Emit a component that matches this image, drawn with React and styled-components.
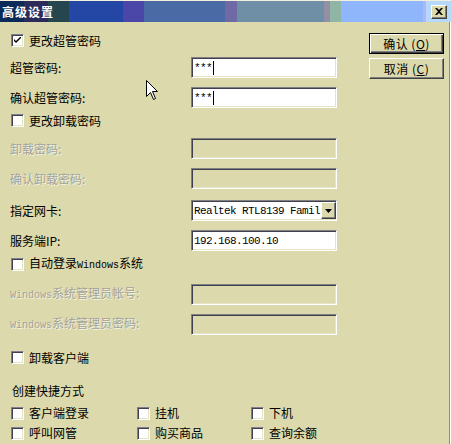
import React from 'react';
import styled, { createGlobalStyle } from 'styled-components';

const GlobalStyle = createGlobalStyle`
	html, body {
		margin: 0;
		padding: 0;
		background: #dcd9ac;
	}
	* {
		box-sizing: border-box;
	}
`;

const FACE = '#dcd9ac';
const CJK = `"Noto Sans CJK SC", "Liberation Sans", sans-serif`;
const MONO = `"Liberation Mono", "DejaVu Sans Mono", monospace`;

const Window = styled.div`
	position: relative;
	width: 451px;
	height: 444px;
	overflow: hidden;
	background: ${FACE};
	font-family: ${CJK};
	font-size: 12px;
	line-height: 14px;
	color: #000;
	box-shadow: inset -1px 0 #ffffff, inset -2px 0 #8a8a9a;
`;

const TitleBar = styled.div`
	display: flex;
	align-items: center;
	justify-content: space-between;
	height: 22px;
	border-top: 1px solid #f2f0dc;
	padding: 0 4px 0 2px;
	background: linear-gradient(
		to right,
		#0a2a5a 0 24px,
		#2b2a5a 24px 48px,
		#25454f 48px 69px,
		#2447a6 69px 123px,
		#4a47a8 123px 144px,
		#4a6aa6 144px 225px,
		#6f6aa5 225px 237px,
		#6e8fa5 237px 324px,
		#938fa5 324px 330px,
		#8fb5a5 330px 341px,
		#8fb5fb 341px 423px,
		#b3b5fb 423px 426px,
		#b5d8fb 426px 100%
	);
`;

const Title = styled.span`
	color: #fff;
	font-weight: bold;
	font-size: 12px;
	letter-spacing: 1px;
	line-height: 21px;
`;

const CloseButton = styled.div`
	display: flex;
	align-items: center;
	justify-content: center;
	width: 16px;
	height: 14px;
	background: ${FACE};
	border: 1px solid;
	border-color: #ffffff #404040 #404040 #ffffff;
	box-shadow: inset -1px -1px #808080;
`;

const Body = styled.div`
	display: flex;
`;

const Form = styled.div`
	flex: 0 0 369px;
	padding-left: 10px;
	display: flex;
	flex-direction: column;
`;

const Side = styled.div`
	display: flex;
	flex-direction: column;
	gap: 4px;
	margin-top: 11px;
`;

const Row = styled.div`
	display: flex;
	align-items: center;
	height: 21px;
	flex: none;
	margin-top: ${(p) => p.$mt}px;
`;

const Label = styled.span`
	flex: 0 0 181px;
	white-space: nowrap;
	color: ${(p) => (p.$disabled ? '#a3a39c' : '#000')};
	text-shadow: ${(p) => (p.$disabled ? '1px 1px 0 #f4f2de' : 'none')};
`;

const Latin = styled.span`
	font-family: ${MONO};
	font-size: 10px;
`;

const Field = styled.div`
	display: flex;
	align-items: center;
	width: 146px;
	height: 21px;
	padding: 0 2px;
	background: ${(p) => (p.$disabled ? FACE : '#fff')};
	border: 1px solid;
	border-color: #808080 #ffffff #ffffff #808080;
	box-shadow: inset 1px 1px #404050, inset -1px -1px #e6e4c8;
	font-family: ${MONO};
	font-size: 11px;
	letter-spacing: -0.6px;
	white-space: nowrap;
	overflow: hidden;
`;

const Caret = styled.span`
	display: inline-block;
	width: 1px;
	height: 14px;
	background: #000;
	margin-left: 1px;
`;

const SelectText = styled.span`
	flex: 1;
	overflow: hidden;
`;

const DropButton = styled.div`
	display: flex;
	align-items: center;
	justify-content: center;
	flex: 0 0 15px;
	height: 17px;
	margin-right: -2px;
	background: ${FACE};
	border: 1px solid;
	border-color: #ffffff #404040 #404040 #ffffff;
	box-shadow: inset -1px -1px #808080;
`;

const Check = styled.label`
	display: flex;
	align-items: center;
	gap: 5px;
	margin-left: 1px;
	white-space: nowrap;
`;

const Box = styled.span`
	display: flex;
	align-items: center;
	justify-content: center;
	width: 13px;
	height: 13px;
	background: #fff;
	border: 1px solid;
	border-color: #808090 #ffffff #ffffff #808090;
	box-shadow: inset 1px 1px #404050, inset -1px -1px #e6e4c8;
`;

const Section = styled.span`
	margin-left: 2px;
`;

const Shortcuts = styled.div`
	display: grid;
	grid-template-columns: 126px 114px 1fr;
	margin-top: 2px;
`;

const ShortcutRow = styled(Row)`
	height: 20px;
`;

const Button = styled.div`
	display: flex;
	align-items: center;
	justify-content: center;
	width: 75px;
	height: 21px;
	background: ${FACE};
	border: 1px solid;
	border-color: ${(p) => (p.$default ? '#000' : '#ffffff #404040 #404040 #ffffff')};
	box-shadow: ${(p) =>
		p.$default
			? 'inset 1px 1px #ffffff, inset -1px -1px #404040, inset -2px -2px #808080'
			: 'inset -1px -1px #808080'};
	letter-spacing: 0.5px;
`;

const Cursor = styled.svg`
	position: absolute;
	left: 146px;
	top: 80px;
`;

const CheckBox = ({ checked, children }) => (
	<Check>
		<Box>
			{checked && (
				<svg width="7" height="7" viewBox="0 0 7 7">
					<path d="M0 2 L0 4 L2 6 L7 1 L7 -1 L2 4 Z" fill="#000" />
				</svg>
			)}
		</Box>
		<span>{children}</span>
	</Check>
);

const Input = ({ value, caret, disabled }) => (
	<Field $disabled={disabled}>
		{value}
		{caret && <Caret />}
	</Field>
);

const shortcuts = ['客户端登录', '挂机', '下机', '呼叫网管', '购买商品', '查询余额'];

const App = () => {
	return (
		<>
			<GlobalStyle />
			<Window>
				<TitleBar>
					<Title>高级设置</Title>
					<CloseButton>
						<svg width="8" height="7" viewBox="0 0 8 7">
							<path
								d="M0 0 L2 0 L4 2 L6 0 L8 0 L5 3.5 L8 7 L6 7 L4 5 L2 7 L0 7 L3 3.5 Z"
								fill="#000"
							/>
						</svg>
					</CloseButton>
				</TitleBar>
				<Body>
					<Form>
						<Row $mt={8}>
							<CheckBox checked>更改超管密码</CheckBox>
						</Row>
						<Row $mt={6}>
							<Label>超管密码:</Label>
							<Input value="***" caret />
						</Row>
						<Row $mt={9}>
							<Label>确认超管密码:</Label>
							<Input value="***" caret />
						</Row>
						<Row $mt={2}>
							<CheckBox>更改卸载密码</CheckBox>
						</Row>
						<Row $mt={7}>
							<Label $disabled>卸载密码:</Label>
							<Input disabled />
						</Row>
						<Row $mt={9}>
							<Label $disabled>确认卸载密码:</Label>
							<Input disabled />
						</Row>
						<Row $mt={11}>
							<Label>指定网卡:</Label>
							<Field>
								<SelectText>Realtek RTL8139 Famil</SelectText>
								<DropButton>
									<svg width="7" height="4" viewBox="0 0 7 4">
										<path d="M0 0 L7 0 L3.5 4 Z" fill="#000" />
									</svg>
								</DropButton>
							</Field>
						</Row>
						<Row $mt={9}>
							<Label>服务端IP:</Label>
							<Input value="192.168.100.10" />
						</Row>
						<Row $mt={3}>
							<CheckBox>
								自动登录<Latin>Windows</Latin>系统
							</CheckBox>
						</Row>
						<Row $mt={9}>
							<Label $disabled>
								<Latin>Windows</Latin>系统管理员帐号:
							</Label>
							<Input disabled />
						</Row>
						<Row $mt={9}>
							<Label $disabled>
								<Latin>Windows</Latin>系统管理员密码:
							</Label>
							<Input disabled />
						</Row>
						<Row $mt={12}>
							<CheckBox>卸载客户端</CheckBox>
						</Row>
						<Row $mt={12}>
							<Section>创建快捷方式</Section>
						</Row>
						<Shortcuts>
							{shortcuts.map((name) => (
								<ShortcutRow key={name} $mt={0}>
									<CheckBox>{name}</CheckBox>
								</ShortcutRow>
							))}
						</Shortcuts>
					</Form>
					<Side>
						<Button $default>
							确认 (<u>O</u>)
						</Button>
						<Button>
							取消 (<u>C</u>)
						</Button>
					</Side>
				</Body>
				<Cursor width="12" height="20" viewBox="0 0 12 20">
					<path
						d="M0.5 0.5 L0.5 16.5 L4.5 12.5 L7.5 19.5 L9.5 18.5 L6.5 11.5 L11.5 11.5 Z"
						fill="#fff"
						stroke="#000"
						strokeWidth="1"
					/>
				</Cursor>
			</Window>
		</>
	);
};

export default App;
